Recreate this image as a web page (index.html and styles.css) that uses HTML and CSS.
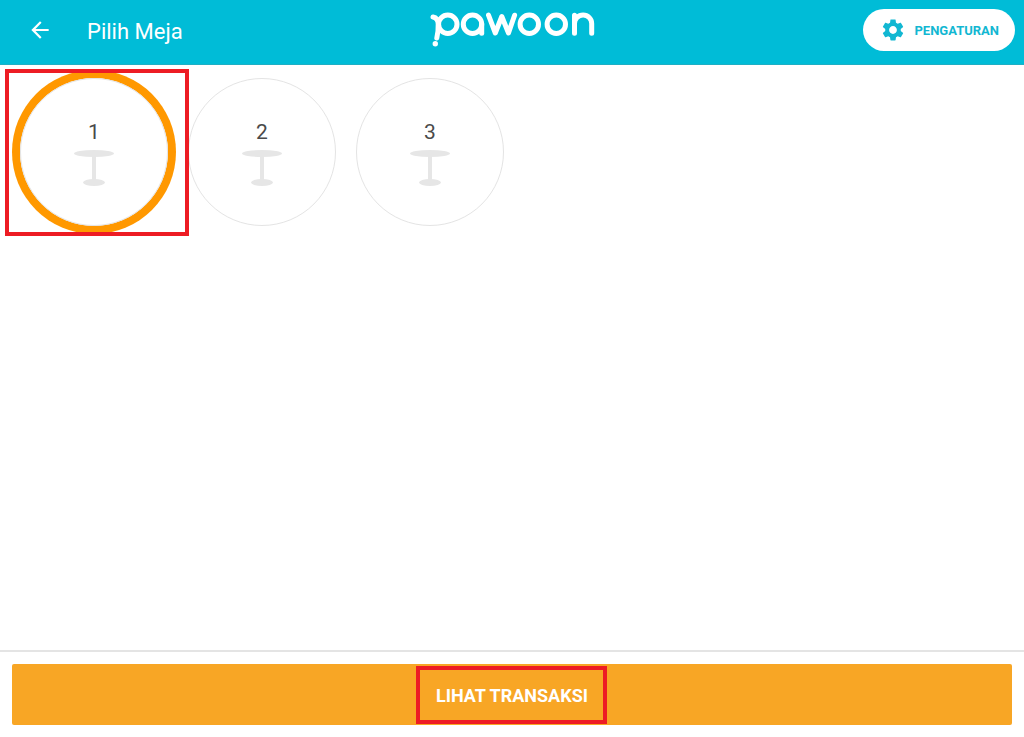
FILE: index.html
```html
<!DOCTYPE html>
<html lang="id">

<head>
    <meta charset="UTF-8" />
    <meta name="viewport" content="width=device-width, initial-scale=1.0" />
    <title>Pilih Meja</title>
    <link rel="stylesheet" href="styles.css">
</head>

<body>
    <header class="topbar">
        <div class="topbar-left">
            <button type="button" class="back-btn" aria-label="Kembali">
                <svg viewBox="0 0 24 24" width="26" height="26">
                    <path d="M20 11H7.83l5.59-5.59L12 4l-8 8 8 8 1.41-1.41L7.83 13H20v-2z" />
                </svg>
            </button>
            <h1>Pilih Meja</h1>
        </div>

        <svg class="logo" viewBox="427 8 170 42" width="170" height="42" role="img" aria-label="pawoon">
            <path d="M433 17Q438 18 438.2 24Q438.5 31 436.8 38" />
            <circle cx="447.8" cy="24.2" r="9.2" />
            <circle class="logo-dot" cx="435.3" cy="43.8" r="2.7" />
            <circle cx="472.5" cy="24.2" r="9.2" />
            <path d="M481.7 24V33.3" />
            <path d="M488.5 15.2L495.3 33L501.8 16.5L508.5 33L514.6 15.2" />
            <circle cx="529.3" cy="24.2" r="9.2" />
            <circle cx="556.3" cy="24.2" r="9.2" />
            <path d="M574.5 33.3V15.2M574.5 23.5A8.6 8.5 0 0 1 591.7 23.5V33.3" />
        </svg>

        <button type="button" class="settings-btn">
            <svg viewBox="0 0 24 24" width="26" height="26">
                <path d="M19.14 12.94c.04-.3.06-.61.06-.94 0-.32-.02-.64-.07-.94l2.03-1.58c.18-.14.23-.41.12-.61l-1.92-3.32c-.12-.22-.37-.29-.59-.22l-2.39.96c-.5-.38-1.03-.7-1.62-.94l-.36-2.54c-.04-.24-.24-.41-.48-.41h-3.84c-.24 0-.43.17-.47.41l-.36 2.54c-.59.24-1.13.57-1.62.94l-2.39-.96c-.22-.08-.47 0-.59.22L2.74 8.87c-.12.21-.08.47.12.61l2.03 1.58c-.05.3-.09.63-.09.94s.02.64.07.94l-2.03 1.58c-.18.14-.23.41-.12.61l1.92 3.32c.12.22.37.29.59.22l2.39-.96c.5.38 1.03.7 1.62.94l.36 2.54c.05.24.24.41.48.41h3.84c.24 0 .44-.17.47-.41l.36-2.54c.59-.24 1.13-.56 1.62-.94l2.39.96c.22.08.47 0 .59-.22l1.92-3.32c.12-.22.07-.47-.12-.61l-2.01-1.58zM12 15.6c-1.98 0-3.6-1.62-3.6-3.6s1.62-3.6 3.6-3.6 3.6 1.62 3.6 3.6-1.62 3.6-3.6 3.6z" />
            </svg>
            PENGATURAN
        </button>
    </header>

    <svg class="symbols" aria-hidden="true">
        <symbol id="table-icon" viewBox="0 0 40 36">
            <ellipse cx="20" cy="3.5" rx="20" ry="3.5" />
            <rect x="18" y="4" width="4" height="28" />
            <ellipse cx="20" cy="32.5" rx="11" ry="3.5" />
        </symbol>
    </svg>

    <main class="tables">
        <button type="button" class="table selected">
            1
            <svg width="40" height="36"><use href="#table-icon" /></svg>
            <span class="marker"></span>
        </button>
        <button type="button" class="table">
            2
            <svg width="40" height="36"><use href="#table-icon" /></svg>
        </button>
        <button type="button" class="table">
            3
            <svg width="40" height="36"><use href="#table-icon" /></svg>
        </button>
    </main>

    <footer class="bottombar">
        <button type="button" class="view-btn">
            <span class="view-label">LIHAT TRANSAKSI<span class="marker"></span></span>
        </button>
    </footer>
</body>

</html>
```

FILE: styles.css
```css
* {
    box-sizing: border-box;
}

body {
    margin: 0;
    min-height: 100vh;
    display: flex;
    flex-direction: column;
    background-color: #fff;
    font-family: Roboto, "Liberation Sans", sans-serif;
}

button {
    border: none;
    padding: 0;
    background: none;
    font-family: inherit;
    cursor: pointer;
}

.symbols {
    display: none;
}

/* Header */
.topbar {
    display: grid;
    grid-template-columns: 1fr auto 1fr;
    align-items: center;
    height: 65px;
    padding: 0 9px 4px;
    background-color: #00bcd7;
    border-bottom: 1px solid #1fafc4;
}

.topbar-left {
    display: flex;
    align-items: center;
    gap: 34px;
    padding-left: 18px;
}

.back-btn svg {
    display: block;
    fill: #fff;
}

.topbar h1 {
    margin: 0;
    padding-top: 3px;
    color: #fff;
    font-size: 22px;
    font-weight: 400;
    line-height: 26px;
}

.logo {
    align-self: start;
    margin-top: 8px;
    fill: none;
    stroke: #fff;
    stroke-width: 5;
    stroke-linecap: round;
    stroke-linejoin: round;
}

.logo-dot {
    fill: #fff;
    stroke: none;
}

.settings-btn {
    justify-self: end;
    display: flex;
    align-items: center;
    gap: 8px;
    height: 42px;
    padding: 0 16px 0 17px;
    border-radius: 21px;
    background-color: #fff;
    color: #12b7d2;
    font-size: 13px;
    font-weight: 700;
}

.settings-btn svg {
    fill: #12b7d2;
}

/* Table list */
.tables {
    flex: 1;
    display: flex;
    flex-wrap: wrap;
    align-content: flex-start;
    gap: 20px;
    padding: 13px 20px;
}

.table {
    position: relative;
    display: flex;
    flex-direction: column;
    align-items: center;
    justify-content: center;
    gap: 6px;
    width: 148px;
    height: 148px;
    padding-top: 2px;
    border: 1px solid #e4e4e4;
    border-radius: 50%;
    color: #4a4a4a;
    font-size: 21px;
    line-height: 24px;
}

.table svg {
    fill: #e6e6e6;
}

.table.selected {
    z-index: 1;
    box-shadow: 0 0 0 8px #ff9800;
}

/* Red highlight frames */
.marker {
    position: absolute;
    border: 4px solid #ed1c24;
    pointer-events: none;
}

.table .marker {
    inset: -10px -22px -11px -16px;
}

.view-label {
    position: relative;
}

.view-label .marker {
    inset: -19px -19px -18px -20px;
}

/* Footer */
.bottombar {
    padding: 12px;
    border-top: 2px solid #e4e4e4;
}

.view-btn {
    display: block;
    width: 100%;
    height: 61px;
    padding-top: 2px;
    border-radius: 2px;
    background-color: #f8a625;
    color: #fff;
    font-size: 18px;
    font-weight: 700;
    line-height: 21px;
}
```
